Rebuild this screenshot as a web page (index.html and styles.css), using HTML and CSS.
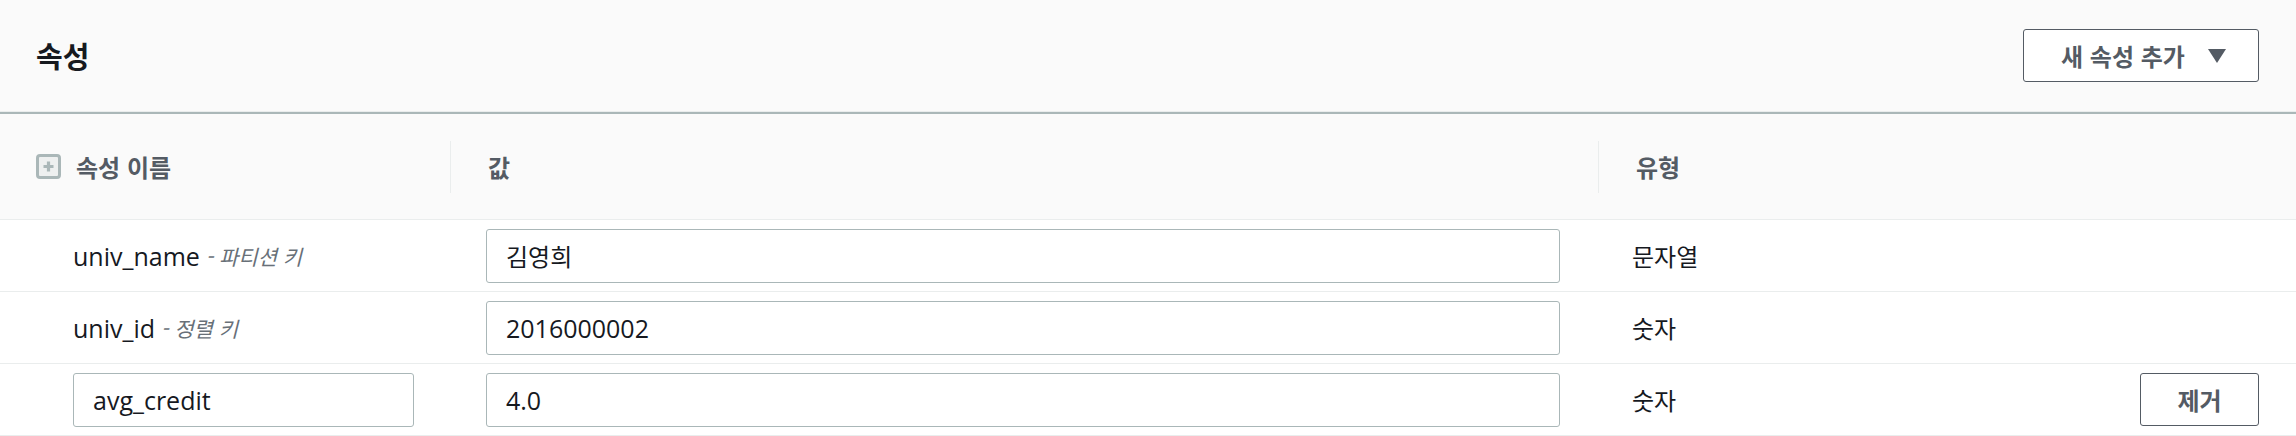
FILE: index.html
```html
<!DOCTYPE html>
<html lang="ko">
  <head>
    <meta charset="UTF-8" />
    <meta name="viewport" content="width=device-width, initial-scale=1.0" />
    <title>속성</title>
    <link rel="stylesheet" href="styles.css">
  </head>
  <body>
    <div class="panel">
      <div class="panel-head">
        <h2 class="panel-title">속성</h2>
        <button class="btn btn-menu">새 속성 추가<span class="caret"></span></button>
      </div>

      <div class="attr-table">
        <div class="attr-row attr-head">
          <div class="cell cell-name">
            <svg class="expand-icon" width="25" height="25" viewBox="0 0 25 25">
              <rect x="1.5" y="1.5" width="22" height="22" rx="2.5" fill="#eef0f0" stroke="#aab7b8" stroke-width="3" />
              <path d="M12.5 7.5v10M7.5 12.5h10" stroke="#aab7b8" stroke-width="3.2" />
            </svg>
            <span class="col-label">속성 이름</span>
          </div>
          <div class="cell cell-value"><span class="col-label divided">값</span></div>
          <div class="cell cell-type"><span class="col-label divided">유형</span></div>
        </div>

        <div class="attr-row">
          <div class="cell cell-name">
            <span class="attr-name">univ_name</span>
            <span class="key-note">- 파티션 키</span>
          </div>
          <div class="cell cell-value"><input class="field field-ko" type="text" value="김영희"></div>
          <div class="cell cell-type"><span class="type-text">문자열</span></div>
        </div>

        <div class="attr-row">
          <div class="cell cell-name">
            <span class="attr-name">univ_id</span>
            <span class="key-note">- 정렬 키</span>
          </div>
          <div class="cell cell-value"><input class="field" type="text" value="2016000002"></div>
          <div class="cell cell-type"><span class="type-text">숫자</span></div>
        </div>

        <div class="attr-row">
          <div class="cell cell-name"><input class="field" type="text" value="avg_credit"></div>
          <div class="cell cell-value"><input class="field" type="text" value="4.0"></div>
          <div class="cell cell-type">
            <span class="type-text">숫자</span>
            <button class="btn btn-remove">제거</button>
          </div>
        </div>
      </div>
    </div>
  </body>
</html>
```

FILE: styles.css
```css
body {
  margin: 0;
  font-family: "Open Sans", "Noto Sans CJK KR", sans-serif;
  color: #16191f;
  background-color: #fafafa;
}

.panel-head {
  height: 111px;
  padding: 0 37px 0 36px;
  display: flex;
  align-items: center;
  justify-content: space-between;
  border-bottom: 1px solid #eaeded;
}

.panel-title {
  margin: 0;
  font-family: "Noto Sans CJK KR", sans-serif;
  font-size: 29px;
  font-weight: 700;
  line-height: 1;
}

.btn {
  font-family: "Noto Sans CJK KR", sans-serif;
  font-size: 24px;
  font-weight: 700;
  color: #545b64;
  background-color: #fff;
  border: 1px solid #545b64;
  border-radius: 3px;
  height: 53px;
  cursor: pointer;
  display: flex;
  align-items: center;
  justify-content: center;
}

.btn-menu {
  width: 236px;
  padding: 0 32px 0 37px;
  justify-content: space-between;
}

.caret {
  width: 0;
  height: 0;
  border-left: 9px solid transparent;
  border-right: 9px solid transparent;
  border-top: 14px solid #545b64;
}

.btn-remove {
  width: 119px;
  margin-left: auto;
}

.attr-table {
  border-top: 2px solid #aab7b8;
}

.attr-row {
  display: grid;
  grid-template-columns: 450px 1148px 1fr;
  height: 71px;
  border-bottom: 1px solid #eaeded;
  background-color: #fff;
}

.attr-head {
  height: 105px;
  background-color: #fafafa;
}

.cell {
  display: flex;
  align-items: center;
}

.cell-name {
  padding: 0 36px 0 73px;
}

.cell-value {
  padding: 0 38px 0 36px;
}

.cell-type {
  padding: 0 37px 0 34px;
}

.attr-head .cell-name {
  padding-left: 36px;
}

.attr-head .cell-value,
.attr-head .cell-type {
  padding-left: 0;
}

.expand-icon {
  margin-right: 15px;
  flex-shrink: 0;
}

.col-label {
  font-family: "Noto Sans CJK KR", sans-serif;
  font-size: 24px;
  font-weight: 700;
  color: #545b64;
}

.col-label.divided {
  height: 52px;
  padding-left: 37px;
  border-left: 1px solid #eaeded;
  display: flex;
  align-items: center;
}

.attr-name {
  font-size: 25px;
}

.key-note {
  margin-left: 6px;
  font-family: "Noto Sans CJK KR", sans-serif;
  font-size: 21px;
  font-style: italic;
  color: #687078;
}

.type-text {
  font-family: "Noto Sans CJK KR", sans-serif;
  font-size: 24px;
}

.field {
  width: 100%;
  height: 54px;
  box-sizing: border-box;
  padding: 0 19px;
  font-family: "Open Sans", "Noto Sans CJK KR", sans-serif;
  font-size: 25px;
  color: #16191f;
  background-color: #fff;
  border: 1px solid #aab7b8;
  border-radius: 3px;
  outline: none;
}

.field-ko {
  font-size: 24px;
}
```
